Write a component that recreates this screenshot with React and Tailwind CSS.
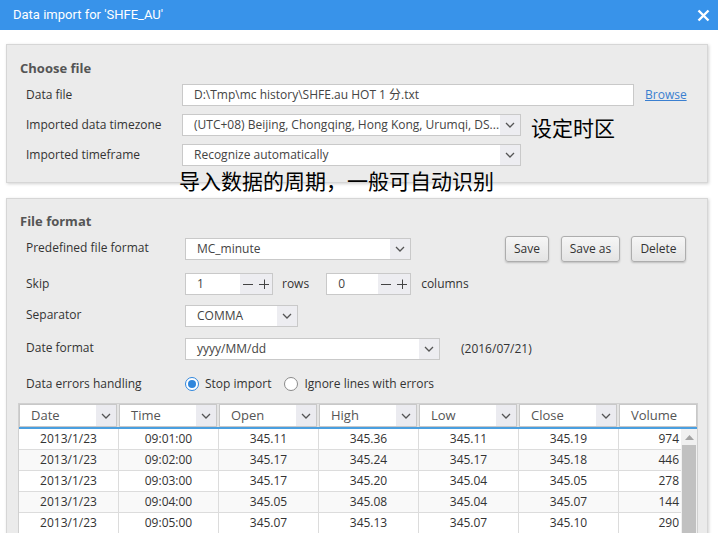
import React from 'react';

const font = { fontFamily: '"Open Sans", "Noto Sans CJK SC", sans-serif' };

const Chevron = () => (
  <svg width="10" height="6" viewBox="0 0 10 6" className="block">
    <path d="M1 1 L5 5 L9 1" fill="none" stroke="#555" strokeWidth="1.3" />
  </svg>
);

const Select = ({ value, className = "" }) => (
  <div className={`h-[22px] bg-white border border-[#c9c9c9] flex items-center ${className}`}>
    <span className="flex-1 pl-[11px] text-[12px] text-[#444] whitespace-nowrap overflow-hidden">{value}</span>
    <div className="w-[20px] h-full bg-[#ededf1] flex items-center justify-center">
      <Chevron />
    </div>
  </div>
);

const Spinner = ({ value, className = "" }) => (
  <div className={`h-[22px] bg-white border border-[#c9c9c9] flex items-center ${className}`}>
    <span className="flex-1 pl-[11px] text-[12px] text-[#444]">{value}</span>
    <div className="w-[32px] h-full bg-[#ededf1] flex items-center justify-center gap-[6px]">
      <svg width="10" height="10" viewBox="0 0 10 10"><path d="M0 5.5 H10" stroke="#444" strokeWidth="1" /></svg>
      <svg width="10" height="10" viewBox="0 0 10 10"><path d="M0 5.5 H10 M5.5 0.5 V10.5" stroke="#444" strokeWidth="1" /></svg>
    </div>
  </div>
);

const Btn = ({ children, className = "" }) => (
  <button className={`h-[26px] rounded-[3px] border border-[#adadad] bg-gradient-to-b from-[#f6f6f6] to-[#e4e4e4] shadow-[0_1px_2px_rgba(0,0,0,0.2)] text-[12px] text-[#333] ${className}`}>
    {children}
  </button>
);

const cols = ["Date", "Time", "Open", "High", "Low", "Close", "Volume"];
const rows = [
  ["2013/1/23", "09:01:00", "345.11", "345.36", "345.11", "345.19", "974"],
  ["2013/1/23", "09:02:00", "345.17", "345.24", "345.17", "345.18", "446"],
  ["2013/1/23", "09:03:00", "345.17", "345.20", "345.04", "345.05", "278"],
  ["2013/1/23", "09:04:00", "345.05", "345.08", "345.04", "345.07", "144"],
  ["2013/1/23", "09:05:00", "345.07", "345.13", "345.07", "345.10", "290"],
];

export default function App() {
  return (
    <div className="w-[718px] h-[533px] overflow-hidden bg-white relative" style={font}>
      {/* Title bar */}
      <div className="h-[30px] bg-[#3893ea] flex items-center pl-[13px] pr-[8px] text-white">
        <span className="text-[13px]" style={{ fontFamily: 'Roboto, sans-serif' }}>Data import for 'SHFE_AU'</span>
        <svg className="ml-auto" width="13" height="13" viewBox="0 0 13 13">
          <path d="M1.5 1.5 L11.5 11.5 M11.5 1.5 L1.5 11.5" stroke="#fff" strokeWidth="2.4" />
        </svg>
      </div>

      <div className="pt-[14px] pl-[6px] w-[708px]">
        {/* Choose file */}
        <div className="relative h-[139px] bg-[#ebebeb] border border-[#d6d6d6] shadow-[1px_1px_3px_rgba(0,0,0,0.18)] pt-[15px] pl-[13px]">
          <div className="h-[16px] leading-[16px] text-[13px] font-bold text-[#555]">Choose file</div>
          <div className="mt-[8px] flex items-center h-[22px]">
            <span className="w-[162px] pl-[6px] text-[12px] text-[#333]">Data file</span>
            <div className="w-[452px] h-[22px] bg-white border border-[#c9c9c9] flex items-center pl-[11px] text-[12px] text-[#444]">D:\Tmp\mc history\SHFE.au HOT 1 分.txt</div>
            <span className="ml-[11px] text-[12px] text-[#3a7fd0] underline">Browse</span>
          </div>
          <div className="mt-[8px] flex items-center h-[22px]">
            <span className="w-[162px] pl-[6px] text-[12px] text-[#333]">Imported data timezone</span>
            <Select className="w-[339px]" value="(UTC+08) Beijing, Chongqing, Hong Kong, Urumqi, DS..." />
            <span className="ml-[10px] text-[21px] text-black leading-none mt-[4px]" style={{ fontFamily: '"Noto Sans CJK SC", sans-serif' }}>设定时区</span>
          </div>
          <div className="mt-[8px] flex items-center h-[22px]">
            <span className="w-[162px] pl-[6px] text-[12px] text-[#333]">Imported timeframe</span>
            <Select className="w-[339px]" value="Recognize automatically" />
          </div>
          <span className="absolute left-[172px] top-[125px] text-[21px] text-black leading-none z-10 whitespace-nowrap" style={{ fontFamily: '"Noto Sans CJK SC", sans-serif' }}>导入数据的周期，一般可自动识别</span>
        </div>

        {/* File format */}
        <div className="mt-[15px] h-[400px] bg-[#ebebeb] border border-[#d6d6d6] shadow-[1px_1px_3px_rgba(0,0,0,0.18)] pt-[14px]">
          <div className="pl-[13px] h-[16px] leading-[16px] text-[13px] font-bold text-[#555]">File format</div>
          <div className="mt-[7px] pl-[19px] pr-[21px] flex items-center h-[26px]">
            <span className="w-[159px] text-[12px] text-[#333] -mt-[3px]">Predefined file format</span>
            <Select className="w-[226px]" value="MC_minute" />
            <Btn className="ml-auto w-[44px]">Save</Btn>
            <Btn className="ml-[12px] w-[59px]">Save as</Btn>
            <Btn className="ml-[11px] w-[55px]">Delete</Btn>
          </div>
          <div className="mt-[11px] pl-[19px] flex items-center h-[22px]">
            <span className="w-[159px] text-[12px] text-[#333]">Skip</span>
            <Spinner className="w-[88px]" value="1" />
            <span className="ml-[9px] text-[12px] text-[#333]">rows</span>
            <Spinner className="ml-[17px] w-[85px]" value="0" />
            <span className="ml-[10px] text-[12px] text-[#333]">columns</span>
          </div>
          <div className="mt-[10px] pl-[19px] flex items-center h-[22px]">
            <span className="w-[159px] text-[12px] text-[#333] -mt-[2px]">Separator</span>
            <Select className="w-[113px]" value="COMMA" />
          </div>
          <div className="mt-[11px] pl-[19px] flex items-center h-[22px]">
            <span className="w-[159px] text-[12px] text-[#333] -mt-[2px]">Date format</span>
            <Select className="w-[255px]" value="yyyy/MM/dd" />
            <span className="ml-[21px] text-[12px] text-[#333]">(2016/07/21)</span>
          </div>
          <div className="mt-[13px] pl-[19px] flex items-center h-[22px]">
            <span className="w-[159px] text-[12px] text-[#333]">Data errors handling</span>
            <span className="w-[14px] h-[14px] rounded-full border border-[#2f86dc] bg-white flex items-center justify-center">
              <span className="w-[8px] h-[8px] rounded-full bg-[#2f86dc]" />
            </span>
            <span className="ml-[6px] text-[12px] text-[#333]">Stop import</span>
            <span className="ml-[13px] w-[14px] h-[14px] rounded-full border border-[#8a8a8a] bg-white" />
            <span className="ml-[6px] text-[12px] text-[#333]">Ignore lines with errors</span>
          </div>

          {/* Table */}
          <div className="mt-[8px] ml-[11px] w-[680px] border border-[#d0d0d0] bg-white">
            <div className="flex gap-[2px] bg-[#e4e4e4] border-b-2 border-[#4a9fe0]">
              {cols.map((c, i) => (
                <div key={c} className={`h-[23px] bg-white border border-[#c8c8c8] flex items-center ${i === 6 ? 'flex-1' : 'w-[98px]'}`}>
                  <span className="flex-1 pl-[11px] text-[13px] text-[#555]">{c}</span>
                  {i < 6 && (
                    <div className="w-[20px] h-full bg-[#ebebf0] flex items-center justify-center"><Chevron /></div>
                  )}
                </div>
              ))}
            </div>
            <div className="flex">
              <div className="flex-1">
                {rows.map((r, ri) => (
                  <div key={ri} className={`flex h-[21px] border-b border-[#dcdcdc] ${ri % 2 ? 'bg-[#f9f9f9]' : 'bg-white'}`}>
                    {r.map((v, ci) => (
                      <div key={ci} className={`h-full flex items-center text-[12px] text-[#333] ${ci === 6 ? 'flex-1 justify-end pr-[2px]' : 'w-[100px] justify-center border-r border-[#dcdcdc]'}`}>{v}</div>
                    ))}
                  </div>
                ))}
              </div>
              <div className="w-[16px] bg-[#f0f0f0] flex flex-col">
                <div className="h-[16px] flex items-center justify-center">
                  <svg width="9" height="5" viewBox="0 0 9 5"><path d="M0 5 L4.5 0 L9 5 Z" fill="#a3a3a3" /></svg>
                </div>
                <div className="flex-1 mx-[1px] bg-[#c1c1c1]" />
              </div>
            </div>
          </div>
        </div>
      </div>
    </div>
  );
}
